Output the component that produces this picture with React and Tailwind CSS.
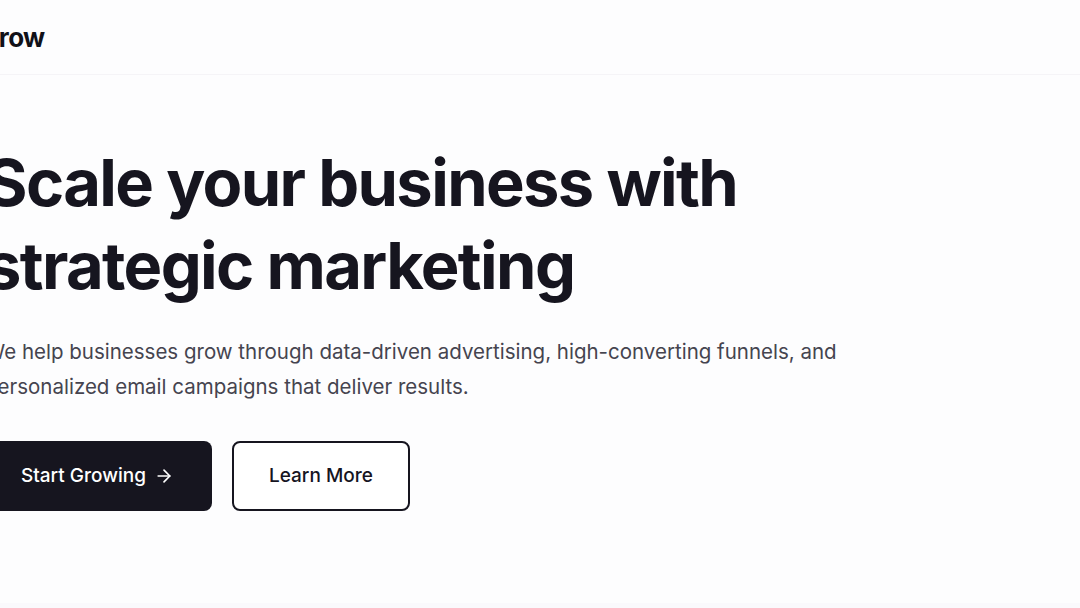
import React from 'react'
import { ArrowRight } from 'lucide-react'

export default function App() {
  return (
    <div className="min-h-screen bg-[#fdfdfe] overflow-hidden" style={{ fontFamily: 'Inter, "Noto Sans", sans-serif' }}>
      {/* Header */}
      <header className="h-[75px] border-b border-[#f5f4f7]">
        <div className="-ml-[20px] h-full flex items-center">
          <span className="text-[26px] font-bold tracking-tight text-[#111118]">Grow</span>
        </div>
      </header>

      {/* Hero */}
      <section className="pt-[66px] pb-[92px]">
        <div className="-ml-[15px] max-w-4xl">
          <h1 className="text-[65px] leading-[83px] font-bold tracking-tight text-[#16151f]">
            Scale your business with strategic marketing
          </h1>
          <p className="mt-[27px] text-[20.5px] leading-[35px] text-[#45444f]">
            We help businesses grow through data-driven advertising, high-converting funnels, and
            personalized email campaigns that deliver results.
          </p>
          <div className="mt-[37px] flex items-center gap-5">
            <button className="h-[70px] pl-9 pr-[38px] flex items-center gap-2 rounded-lg bg-[#16151f] text-white text-[19px] font-medium">
              <span>Start Growing</span>
              <ArrowRight className="h-5 w-5" strokeWidth={2} />
            </button>
            <button className="h-[70px] px-[35px] flex items-center rounded-lg border-2 border-[#16151f] bg-white text-[#16151f] text-[19px] font-medium">
              Learn More
            </button>
          </div>
        </div>
      </section>

      <section className="h-40 bg-[#faf9fc]"></section>
    </div>
  )
}
